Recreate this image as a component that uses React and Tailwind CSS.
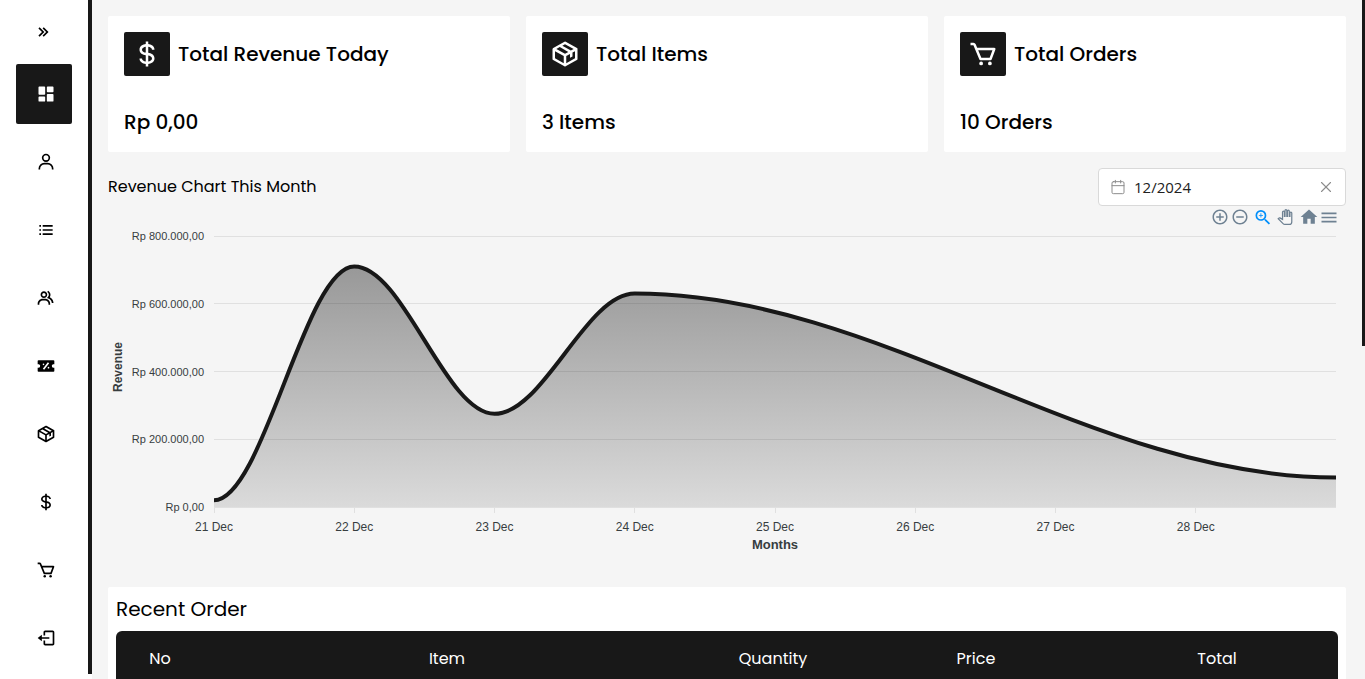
import React, { useState } from "react";
import {
  BiCart,
  BiChevronsRight,
  BiDollar,
  BiGroup,
  BiListUl,
  BiLogOut,
  BiPackage,
  BiSolidDashboard,
  BiSolidDiscount,
  BiUser,
} from "react-icons/bi";
import {
  MdAddCircleOutline,
  MdHome,
  MdMenu,
  MdRemoveCircleOutline,
  MdZoomIn,
} from "react-icons/md";
import { Calendar, X } from "lucide-react";

const menus = [
  { name: "Dashboard", icon: BiSolidDashboard },
  { name: "Users", icon: BiUser },
  { name: "Categories", icon: BiListUl },
  { name: "Customers", icon: BiGroup },
  { name: "Discounts", icon: BiSolidDiscount },
  { name: "Items", icon: BiPackage },
  { name: "Revenue", icon: BiDollar },
  { name: "Orders", icon: BiCart },
  { name: "Logout", icon: BiLogOut },
];

const stats = [
  { title: "Total Revenue Today", value: "Rp 0,00", icon: BiDollar },
  { title: "Total Items", value: "3 Items", icon: BiPackage },
  { title: "Total Orders", value: "10 Orders", icon: BiCart },
];

const columns = [
  { name: "No", width: "w-[88px]" },
  { name: "Item", width: "w-auto" },
  { name: "Quantity", width: "w-[166px]" },
  { name: "Price", width: "w-[240px]" },
  { name: "Total", width: "w-[242px]" },
];

const revenue = [
  { day: 21, total: 20000 },
  { day: 22, total: 710000 },
  { day: 23, total: 275000 },
  { day: 24, total: 630000 },
  { day: 29, total: 87000 },
];

const yTicks = [
  { value: 800000, label: "Rp 800.000,00" },
  { value: 600000, label: "Rp 600.000,00" },
  { value: 400000, label: "Rp 400.000,00" },
  { value: 200000, label: "Rp 200.000,00" },
  { value: 0, label: "Rp 0,00" },
];

const xTicks = [21, 22, 23, 24, 25, 26, 27, 28];

// plot area inside the chart viewBox
const plot = { left: 106, right: 1228, top: 6, bottom: 277 };

const toX = (day) =>
  plot.left + ((day - 21) / 8) * (plot.right - plot.left);
const toY = (value) =>
  plot.bottom - (value / 800000) * (plot.bottom - plot.top);

const linePath = revenue
  .map(({ day, total }, i) => {
    const x = toX(day);
    const y = toY(total);
    if (i === 0) return `M ${x} ${y}`;
    const px = toX(revenue[i - 1].day);
    const py = toY(revenue[i - 1].total);
    const c = (x - px) * 0.35;
    return `C ${px + c} ${py} ${x - c} ${y} ${x} ${y}`;
  })
  .join(" ");

const areaPath = `${linePath} L ${plot.right} ${plot.bottom} L ${plot.left} ${plot.bottom} Z`;

const Sidebar = () => (
  <aside className="bg-white pb-[5px] shrink-0 flex">
    <div className="w-[92px] border-r-4 border-[#181818] px-4 pt-4">
      <button
        aria-label="Open menu"
        className="flex w-14 h-8 items-center pl-[18px] mb-4"
      >
        <BiChevronsRight size={20} />
      </button>
      <nav className="flex flex-col gap-2">
        {menus.map(({ name, icon: Icon }, i) => (
          <a
            key={name}
            href="#"
            aria-label={name}
            className={
              i === 0
                ? "flex w-14 h-[60px] items-center pl-5 rounded-xs bg-[#181818] text-white"
                : "flex w-14 h-[60px] items-center pl-5 rounded-xs text-black"
            }
          >
            <Icon size={20} />
          </a>
        ))}
      </nav>
    </div>
  </aside>
);

const StatCard = ({ title, value, icon: Icon }) => (
  <div className="bg-white rounded-xs p-4 flex flex-col gap-8">
    <div className="flex items-center gap-2">
      <div className="bg-[#181818] text-white rounded-xs w-[46px] h-11 flex items-center justify-center">
        <Icon size={30} />
      </div>
      <h2 className="text-xl font-medium">{title}</h2>
    </div>
    <p className="text-xl font-medium">{value}</p>
  </div>
);

const PanIcon = () => (
  <svg width="16" height="16" viewBox="-1 -1 26 26">
    <path
      d="M23 5.5V20c0 2.2-1.8 4-4 4h-7.3c-1.08 0-2.1-.43-2.85-1.19L1 14.83s1.26-1.23 1.3-1.25c.22-.19.49-.29.79-.29.22 0 .42.06.6.16.04.01 4.31 2.46 4.31 2.46V4c0-.83.67-1.5 1.5-1.5S11 3.17 11 4v7h1V1.5c0-.83.67-1.5 1.5-1.5S15 .67 15 1.5V11h1V2.5c0-.83.67-1.5 1.5-1.5s1.5.67 1.5 1.5V11h1V5.5c0-.83.67-1.5 1.5-1.5s1.5.67 1.5 1.5z"
      fill="#f7f7f7"
      stroke="#6e8192"
      strokeWidth="2"
    />
  </svg>
);

const ChartToolbar = () => (
  <div className="flex justify-end pr-[7px] pb-0.5 h-6 text-[#6e8192]">
    <button aria-label="Zoom in" className="w-5 flex items-center justify-center">
      <MdAddCircleOutline size={18} />
    </button>
    <button aria-label="Zoom out" className="w-5 mr-[3px] flex items-center justify-center">
      <MdRemoveCircleOutline size={18} />
    </button>
    <button aria-label="Selection zoom" className="w-5 mr-0.5 flex items-center justify-center text-[#008ffb]">
      <MdZoomIn size={21} />
    </button>
    <button aria-label="Panning" className="w-5 mr-1 flex items-center justify-center">
      <PanIcon />
    </button>
    <button aria-label="Reset zoom" className="w-5 flex items-center justify-center">
      <MdHome size={20} />
    </button>
    <button aria-label="Menu" className="w-5 flex items-center justify-center">
      <MdMenu size={21} />
    </button>
  </div>
);

const RevenueChart = () => (
  <svg
    viewBox="0 0 1238 341"
    className="block w-full font-['Liberation_Sans',Arial,sans-serif]"
    fill="#373d3f"
  >
    <defs>
      <linearGradient id="area" x1="0" y1="0" x2="0" y2="1">
        <stop offset="0" stopColor="#181818" stopOpacity="0.42" />
        <stop offset="1" stopColor="#181818" stopOpacity="0.12" />
      </linearGradient>
      <clipPath id="plot">
        <rect
          x={plot.left}
          y={plot.top}
          width={plot.right - plot.left}
          height={plot.bottom - plot.top + 1}
        />
      </clipPath>
    </defs>

    {yTicks.map(({ value, label }) => (
      <g key={value}>
        <line
          x1={plot.left}
          x2={plot.right}
          y1={Math.floor(toY(value)) + 0.5}
          y2={Math.floor(toY(value)) + 0.5}
          stroke="#e0e0e0"
        />
        <text x="96" y={Math.round(toY(value)) + 4} fontSize="11" textAnchor="end">
          {label}
        </text>
      </g>
    ))}

    {xTicks.map((day) => (
      <g key={day}>
        <line
          x1={Math.floor(toX(day)) + 0.5}
          x2={Math.floor(toX(day)) + 0.5}
          y1={plot.bottom}
          y2={plot.bottom + 6}
          stroke="#e0e0e0"
        />
        <text x={toX(day)} y={plot.bottom + 24} fontSize="12" textAnchor="middle">
          {day} Dec
        </text>
      </g>
    ))}

    <g clipPath="url(#plot)">
      <path d={areaPath} fill="url(#area)" />
      <path d={linePath} fill="none" stroke="#181818" strokeWidth="4" />
    </g>

    <text
      transform="translate(14 137) rotate(-90)"
      fontSize="12"
      fontWeight="700"
      textAnchor="middle"
    >
      Revenue
    </text>
    <text x="667" y="319" fontSize="13" fontWeight="700" textAnchor="middle">
      Months
    </text>
  </svg>
);

const App = () => {
  const [month, setMonth] = useState("12/2024");

  return (
    <div className="flex h-screen overflow-hidden bg-[#f5f5f5] text-black font-['Poppins','Inter',sans-serif]">
      <Sidebar />

      <main className="flex-1 min-w-0 p-4">
        <div className="grid grid-cols-3 gap-4">
          {stats.map((stat) => (
            <StatCard key={stat.title} {...stat} />
          ))}
        </div>

        {/* Revenue chart */}
        <section className="mt-4">
          <div className="flex justify-between items-center">
            <label htmlFor="month" className="text-base">
              Revenue Chart This Month
            </label>
            <div className="flex items-center w-[248px] h-[38px] bg-white border border-[#d9d9d9] rounded pl-[11px] pr-2.5">
              <Calendar size={16} strokeWidth={1.5} className="text-[#8c8c8c]" />
              <input
                id="month"
                value={month}
                onChange={(e) => setMonth(e.target.value)}
                className="flex-1 min-w-0 ml-2 outline-none text-[15px] leading-6 text-[#212121] font-['Open_Sans',sans-serif]"
              />
              <button aria-label="Clear" onClick={() => setMonth("")}>
                <X size={18} strokeWidth={1.5} className="text-[#8c8c8c]" />
              </button>
            </div>
          </div>
          <ChartToolbar />
          <RevenueChart />
        </section>

        {/* Recent order */}
        <section className="mt-4 bg-white rounded-xs p-2">
          <h2 className="text-xl mb-2">Recent Order</h2>
          <div className="rounded-t-md overflow-hidden">
            <table className="w-full table-fixed">
              <thead className="bg-[#181818] text-white">
                <tr>
                  {columns.map(({ name, width }) => (
                    <th
                      key={name}
                      className={`${width} h-14 text-base font-normal text-center`}
                    >
                      {name}
                    </th>
                  ))}
                </tr>
              </thead>
            </table>
          </div>
        </section>
      </main>

      {/* Scroll thumb */}
      <div className="w-[3px] shrink-0">
        <div className="h-[51%] bg-[#181818]" />
      </div>
    </div>
  );
};

export default App;
